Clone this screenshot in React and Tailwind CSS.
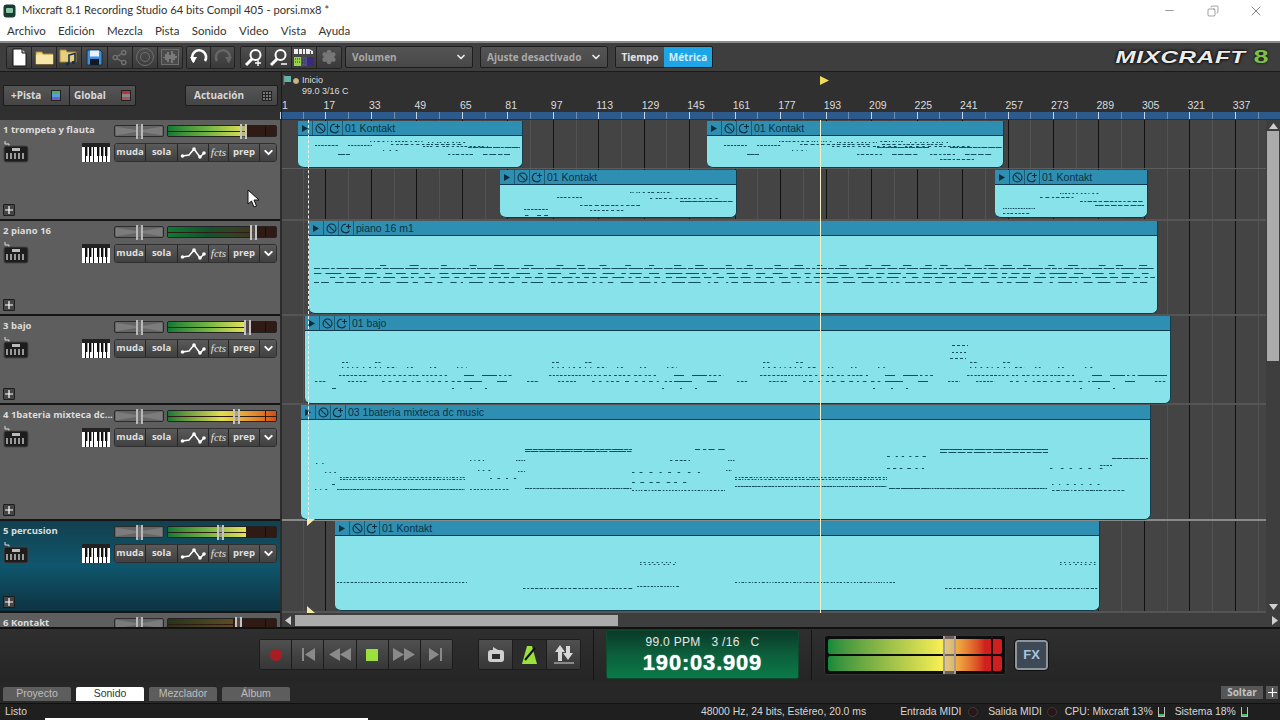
import React from "react";
import { ChevronDown, Minus, X, Copy, Settings, Share2 } from "lucide-react";

const rng = (seed) => {
  let s = seed;
  return () => {
    s = (s * 16807) % 2147483647;
    return s / 2147483647;
  };
};
// dashes on one pitch row: [x1, x2, y, minLen, maxLen, minGap, maxGap]
const row = (x1, x2, y, a = 2, b = 6, g1 = 1, g2 = 3, seed = 7) => {
  const r = rng(Math.round(x1 * 13 + y * 97 + seed * 31) + 11);
  const out = [];
  let x = x1;
  while (x < x2) {
    const w = a + r() * (b - a);
    out.push([x, y, Math.min(w, x2 - x)]);
    x += w + g1 + r() * (g2 - g1);
  }
  return out;
};
const many = (list) => list.flatMap((l) => row(...l));

const notesK1 = (o, t) =>
  many([
    [o + 17, o + 40, t + 24, 2, 3, 1, 1],
    [o + 50, o + 74, t + 24, 2, 3, 1, 1],
    [o + 40, o + 52, t + 33, 6, 12, 0, 1],
    [o + 72, o + 125, t + 20, 1, 3, 1, 3],
    [o + 93, o + 165, t + 23, 2, 4, 1, 3],
    [o + 125, o + 190, t + 25, 2, 3, 1, 4],
    [o + 170, o + 222, t + 26, 3, 8, 0, 1],
    [o + 130, o + 170, t + 21, 1, 2, 1, 4],
    [o + 85, o + 100, t + 29, 1, 2, 3, 6],
    [o + 150, o + 175, t + 33, 2, 4, 1, 2],
    [o + 185, o + 212, t + 33, 4, 7, 1, 2],
  ]);

const bassMotif = (b) =>
  many([
    [b, b + 8, 362, 2, 3, 1, 2],
    [b + 33, b + 40, 362, 2, 3, 1, 2],
    [b, b + 40, 367, 1, 2, 3, 5],
    [b + 45, b + 55, 367, 2, 3, 2, 3],
    [b + 65, b + 72, 367, 1, 2, 2, 3],
    [b + 88, b + 95, 367, 1, 2, 2, 3],
    [b + 115, b + 125, 367, 1, 2, 3, 4],
    [b - 3, b + 40, 375, 2, 3, 1, 2],
    [b + 42, b + 105, 375, 2, 3, 1, 4],
    [b + 122, b + 132, 375, 10, 10, 1, 1],
    [b + 140, b + 155, 375, 15, 15, 1, 1],
    [b + 157, b + 172, 375, 2, 3, 2, 3],
    [b + 6, b + 25, 381, 2, 3, 1, 2],
    [b + 40, b + 120, 381, 2, 4, 2, 6],
    [b + 122, b + 140, 381, 18, 18, 1, 1],
    [b + 155, b + 165, 381, 10, 10, 1, 1],
    [b + 110, b + 112, 388, 2, 2, 1, 1],
    [b + 128, b + 130, 388, 2, 2, 1, 1],
    [b + 143, b + 145, 388, 2, 2, 1, 1],
    [b + 185, b + 197, 381, 2, 3, 1, 2],
  ]);

const clips = [
  { lane: 0, x: 298, top: 121, w: 225, h: 47, name: "01 Kontakt", notes: notesK1(298, 121) },
  { lane: 0, x: 707, top: 121, w: 297, h: 47, name: "01 Kontakt", notes: [...notesK1(707, 121), ...notesK1(780, 121).filter((n) => n[0] > 880), ...many([[940, 975, 159, 2, 4, 1, 2]])] },
  { lane: 0, x: 500, top: 170, w: 237, h: 48, name: "01 Kontakt", notes: many([[524, 548, 209, 2, 3, 1, 1], [557, 582, 197, 2, 3, 1, 2], [580, 640, 205, 2, 4, 1, 3], [630, 672, 192, 1, 3, 1, 3], [650, 720, 198, 2, 3, 1, 4], [680, 733, 201, 3, 8, 0, 1], [590, 625, 210, 2, 3, 1, 3], [525, 550, 215, 3, 5, 3, 9]]) },
  { lane: 0, x: 995, top: 170, w: 153, h: 48, name: "01 Kontakt", notes: many([[1003, 1035, 208, 1, 2, 1, 1], [1003, 1030, 213, 2, 3, 1, 2], [1040, 1075, 197, 2, 4, 1, 3], [1060, 1100, 193, 1, 2, 1, 3], [1080, 1144, 201, 2, 5, 1, 2], [1095, 1144, 205, 3, 6, 0, 2]]) },
  {
    lane: 1, x: 309, top: 221, w: 849, h: 93, name: "piano 16 m1",
    notes: many([
      [380, 1155, 265, 5, 10, 8, 24],
      [314, 1155, 268, 3, 16, 1, 2],
      [314, 1155, 273, 4, 18, 3, 9],
      [330, 1155, 277, 3, 12, 2, 6],
      [314, 1155, 282, 2, 14, 2, 8],
    ]),
  },
  {
    lane: 2, x: 305, top: 316, w: 866, h: 88, name: "01 bajo",
    notes: [
      ...bassMotif(342),
      ...bassMotif(552),
      ...bassMotif(763),
      ...bassMotif(970),
      ...many([
        [315, 327, 381, 2, 3, 1, 2],
        [332, 336, 388, 4, 4, 1, 1],
        [952, 968, 345, 3, 3, 2, 2],
        [952, 966, 352, 2, 2, 2, 2],
        [950, 966, 358, 3, 3, 2, 2],
        [1138, 1167, 375, 29, 29, 1, 1],
      ]),
    ],
  },
  {
    lane: 3, x: 301, top: 405, w: 850, h: 115, name: "03 1bateria mixteca dc music",
    notes: many([
      [340, 465, 477, 1, 3, 1, 2], [340, 465, 479, 1, 3, 1, 2],
      [315, 330, 489, 1, 2, 3, 4], [337, 465, 489, 1, 3, 0, 1], [470, 510, 489, 1, 3, 1, 2],
      [316, 326, 463, 1, 2, 4, 5], [325, 336, 472, 1, 2, 3, 5], [332, 336, 484, 3, 3, 2, 2],
      [470, 485, 460, 1, 2, 2, 3], [478, 495, 470, 1, 2, 3, 5], [490, 520, 478, 1, 3, 4, 6],
      [516, 526, 460, 1, 2, 1, 1], [518, 525, 471, 1, 2, 1, 2],
      [525, 632, 449, 3, 14, 0, 1], [525, 632, 451, 2, 10, 0, 2], [525, 632, 488, 1, 3, 0, 1],
      [632, 700, 472, 2, 3, 5, 8], [632, 690, 482, 2, 4, 3, 7], [632, 725, 490, 1, 3, 1, 2],
      [670, 690, 460, 2, 3, 1, 3], [695, 725, 449, 3, 8, 2, 5],
      [728, 735, 460, 1, 2, 1, 1], [726, 732, 470, 1, 2, 1, 2],
      [735, 887, 477, 1, 3, 1, 2], [735, 887, 479, 1, 3, 1, 2], [735, 887, 486, 1, 3, 0, 1],
      [887, 930, 456, 2, 4, 3, 6], [887, 925, 468, 2, 4, 3, 6],
      [889, 925, 488, 4, 8, 0, 1], [940, 1048, 449, 5, 16, 0, 1], [940, 1048, 452, 3, 12, 1, 2], [925, 1048, 488, 1, 3, 0, 1],
      [1050, 1110, 468, 2, 3, 6, 9], [1052, 1100, 484, 1, 2, 5, 7], [1052, 1125, 490, 1, 4, 0, 2],
      [1112, 1148, 458, 3, 6, 0, 1], [1100, 1112, 465, 2, 3, 1, 1],
    ]),
  },
  {
    lane: 4, x: 335, top: 521, w: 765, h: 90, name: "01 Kontakt",
    notes: many([
      [337, 467, 582, 1, 3, 1, 2],
      [523, 633, 588, 1, 4, 1, 2],
      [637, 680, 586, 1, 3, 1, 2],
      [640, 678, 562, 1, 2, 2, 4],
      [640, 678, 564, 1, 2, 2, 4],
      [735, 895, 582, 1, 3, 1, 2],
      [945, 1098, 588, 1, 4, 1, 2],
      [1060, 1097, 562, 1, 2, 2, 4],
      [1060, 1097, 564, 1, 2, 2, 4],
    ]),
  },
];

const tracks = [
  { h: "h-[101px]", name: "1 trompeta y flauta", fill: 73, thumb: 67, bright: true },
  { h: "h-[95px]", name: "2 piano 16", fill: 80, thumb: 76, mid: true },
  { h: "h-[89px]", name: "3 bajo", fill: 71, thumb: 70, bright: true },
  { h: "h-[116px]", name: "4 1bateria mixteca dc...", fill: 100, thumb: 60, hot: true },
  { h: "h-[92px]", name: "5 percusion", fill: 72, thumb: 45, sel: true, bright: true },
  { h: "h-[20px]", name: "6 Kontakt", fill: 60, thumb: 62, off: true },
];
const laneHeights = ["h-[101px]", "h-[95px]", "h-[89px]", "h-[116px]", "h-[92px]"];
const rulerNums = [1, 17, 33, 49, 65, 81, 97, 113, 129, 145, 161, 177, 193, 209, 225, 241, 257, 273, 289, 305, 321, 337];
const CANVAS_X = 282;
const barX = (k) => 280 + 45.47 * k;

const Cap = ({ children, className = "" }) => (
  <div className={`flex items-center justify-center h-full border-r border-[#262626] last:border-r-0 bg-linear-to-b from-[#5a5a5a] to-[#404040] ${className}`}>{children}</div>
);

const Doc = () => (
  <svg width="15" height="19" viewBox="0 0 15 19"><path d="M1 1h9l4 4v13H1z" fill="#fff" stroke="#111" /><path d="M10 1v4h4" fill="#ccc" stroke="#111" /></svg>
);
const Folder = () => (
  <svg width="19" height="15" viewBox="0 0 19 15"><path d="M1 2h6l1 2h10v10H1z" fill="#f3dc8f" stroke="#a98a3a" /><path d="M1 5h17v9H1z" fill="#f7e6a8" /></svg>
);
const FolderMusic = () => (
  <svg width="20" height="18" viewBox="0 0 20 18"><path d="M1 2h6l1 2h9v10H1z" fill="#e7cf80" stroke="#a98a3a" /><path d="M10 16V7l6-1.5V14" fill="none" stroke="#16304a" strokeWidth="1.6" /><circle cx="8.5" cy="16" r="1.8" fill="#16304a" /><circle cx="14.5" cy="14.5" r="1.8" fill="#16304a" /></svg>
);
const Save = () => (
  <svg width="17" height="17" viewBox="0 0 17 17"><path d="M1 1h13l2 2v13H1z" fill="#3f8fdc" stroke="#12304e" /><rect x="4" y="1.5" width="9" height="6" fill="#e8f2fb" /><rect x="4" y="10" width="9" height="6" fill="#101a24" /></svg>
);
const Pod = () => (
  <svg width="20" height="20" viewBox="0 0 20 20" fill="none" stroke="#6f6f6f"><circle cx="10" cy="10" r="8.5" /><circle cx="10" cy="10" r="4.5" /></svg>
);
const WaveDim = () => (
  <svg width="18" height="16" viewBox="0 0 18 16"><rect x=".5" y=".5" width="17" height="15" fill="#4b4b4b" stroke="#6f6f6f" /><path d="M3 8v1M5 5v6M7 3v10M9 6v4M11 2v12M13 5v6M15 7v2" stroke="#9a9a9a" strokeWidth="1.2" /></svg>
);
const Undo = ({ c = "#fff", flip }) => (
  <svg width="20" height="19" viewBox="0 0 20 19" fill="none" className={flip ? "-scale-x-100" : ""}><path d="M5 14 A7 7 0 1 1 16 13" stroke={c} strokeWidth="2.6" /><path d="M1 9h7l-3.5 6z" fill={c} /></svg>
);
const Zoom = ({ plus }) => (
  <svg width="19" height="19" viewBox="0 0 19 19" fill="none"><circle cx="11.5" cy="7" r="5" stroke="#fff" strokeWidth="2" /><path d="M8 11 L2 17" stroke="#fff" strokeWidth="3" /><path d={plus ? "M11 15h6M14 12v6" : "M12 16h6"} stroke="#fff" strokeWidth="1.4" /></svg>
);
const MidiIcon = () => (
  <svg width="22" height="19" viewBox="0 0 22 19"><path d="M1 1h4v5h1V1h3v5h1V1h2v5h1V1h3l4 2v3h-2V3h-1v3H1z" fill="#eee" /><rect x="1" y="9" width="7" height="9" fill="#9bd050" /><rect x="8" y="9" width="6" height="9" fill="#4c4c8a" /><rect x="14" y="9" width="7" height="9" fill="#3a2a80" /><path d="M2 11h5M2 14h5M9 12h4M9 15h4" stroke="#333" strokeDasharray="1 1" /></svg>
);
const ListIcon = ({ red }) => (
  <div className="flex flex-col w-[10px] h-[11px] border border-[#222]">
    <div className={red ? "flex-1 bg-[#c0303a]" : "flex-1 bg-[#4fae5c]"} />
    <div className={red ? "flex-1 bg-[#888]" : "flex-1 bg-[#5aa0d8]"} />
    <div className={red ? "flex-1 bg-[#aa5555]" : "flex-1 bg-[#6a62c8]"} />
  </div>
);

const Synth = () => (
  <svg width="26" height="24" viewBox="0 0 26 24" className="shrink-0 -mt-[3px]">
    <path d="M2 1v3h4v2" fill="none" stroke="#ddd" strokeWidth="1" />
    <rect x="1" y="6" width="24" height="16" rx="2" fill="#1d1d1d" stroke="#444" />
    <rect x="9" y="8" width="8" height="3" fill="#bbb" />
    <path d="M4 13v6M8 13v6M12 13v6M16 13v6M20 13v6" stroke="#999" strokeWidth="2" />
  </svg>
);
const Piano = () => (
  <div className="w-[28px] h-[19px] bg-[#222] flex flex-col pt-[4px]">
    <div className="flex-1 flex gap-px bg-[#111] relative">
      {[0, 1, 2, 3, 4, 5, 6].map((i) => (
        <div key={i} className="flex-1 bg-white" />
      ))}
      <svg width="28" height="9" className="absolute left-0 top-0" viewBox="0 0 28 9">
        {[3, 7, 15, 19, 23].map((x) => (
          <rect key={x} x={x} y="0" width="2.4" height="9" fill="#111" />
        ))}
      </svg>
    </div>
  </div>
);
const Curve = () => (
  <svg width="26" height="14" viewBox="0 0 26 14" fill="none"><path d="M2 10 L9 9 L14 3 L20 11 L24 7" stroke="#fff" strokeWidth="1.5" /><circle cx="2.5" cy="10" r="1.8" fill="#fff" /><circle cx="14" cy="3" r="1.8" fill="#fff" /><circle cx="20" cy="11" r="1.8" fill="#fff" /><circle cx="24" cy="7" r="1.8" fill="#fff" /></svg>
);

function TrackHead({ t }) {
  const lit = t.off ? "opacity-25" : "";
  const bar = t.hot
    ? "bg-linear-to-r from-[#0d7a35] via-[#e3df4c] to-[#d84a14]"
    : t.mid
      ? "bg-linear-to-r from-[#0d7a35] via-[#11512a] to-[#3b3520]"
      : "bg-linear-to-r from-[#0d7a35] via-[#71b343] to-[#e4e25a]";
  return (
    <div className={`${t.h} shrink-0 flex flex-col overflow-hidden border-b-2 border-[#151515] pl-[3px] pr-[3px] pt-[4px] ${t.sel ? "bg-linear-to-b from-[#12404f] via-[#0f566d] to-[#0c3342]" : "bg-[#5e5e5e]"}`}>
      <div className="flex items-center h-[14px] shrink-0">
        <span className="w-[111px] shrink-0 pb-[2px] text-[9.5px] font-bold leading-none text-[#dcdcdc] whitespace-nowrap">{t.name}</span>
        <div className="relative shrink-0 w-[50px] h-[12px] rounded-[2px] border border-[#2c2c2c] bg-[#656565]">
          <svg className="absolute inset-0 w-full h-full" viewBox="0 0 50 12" preserveAspectRatio="none"><path d="M1 1L24 5v2L1 11zM49 1L26 5v2L49 11z" fill="#7c7c7c" /></svg>
          <div className="absolute left-[21px] top-[-2px] w-[7px] h-[15px] border-x-2 border-[#b9b9b9] bg-[#777]/60" />
        </div>
        <div className="relative shrink-0 ml-[3px] w-[110px] h-[12px] rounded-[2px] border border-[#222] bg-[#2f1a14]">
          <div className={`absolute inset-y-0 left-0 flex flex-col gap-px overflow-hidden ${lit}`} style={{ width: `${t.fill}%` }}>
            <div className={`flex-1 ${bar}`} />
            <div className={`flex-1 ${bar}`} />
          </div>
          <div className="absolute right-[10px] inset-y-0 w-px bg-[#1c0d08]" />
          <div className="absolute top-[-2px] w-[7px] h-[15px] border-x-2 border-[#c4c4c4] bg-[#888]/40" style={{ left: `${t.thumb}%` }} />
        </div>
      </div>
      {!t.off && (
        <>
          <div className="flex items-start mt-[5px] shrink-0 h-[24px]">
            <Synth />
            <div className="ml-[53px]"><Piano /></div>
            <div className="ml-[4px] flex w-[164px] h-[19px] rounded-[3px] overflow-hidden border border-[#2f2f2f] text-[9.5px] font-bold text-[#e0e0e0]">
              <Cap className="w-[31px]">muda</Cap>
              <Cap className="w-[32px]">sola</Cap>
              <Cap className="w-[31px]"><Curve /></Cap>
              <Cap className="w-[20px] italic font-normal text-[11px] font-['Liberation_Serif']">fcts</Cap>
              <Cap className="w-[31px]">prep</Cap>
              <Cap className="flex-1"><ChevronDown size={13} strokeWidth={3.5} color="#fff" /></Cap>
            </div>
          </div>
          <div className="mt-auto mb-[3px] w-[12px] h-[12px] rounded-[1px] border border-[#1d1d1d] bg-[#444] flex items-center justify-center">
            <svg width="8" height="8" viewBox="0 0 8 8"><path d="M4 0v8M0 4h8" stroke="#fff" strokeWidth="1.2" /></svg>
          </div>
        </>
      )}
    </div>
  );
}

function Clip({ c }) {
  return (
    <div
      className="absolute z-10 flex flex-col rounded-b-[6px] overflow-hidden border-b border-r border-[#123c4c] bg-[#88e2ea]"
      style={{ left: c.x - CANVAS_X, top: c.top - 120 - [0, 101, 196, 285, 401][c.lane], width: c.w, height: c.h }}
    >
      <div className="flex items-center h-[15px] shrink-0 bg-[#2e8fb2] border-b border-[#0e3a4e] text-[10.5px] text-[#0d3344] font-['Liberation_Sans'] leading-none">
        <div className="w-[15px] h-full flex items-center justify-center border-r border-[#1c5d76]">
          <svg width="6" height="7" viewBox="0 0 6 7"><path d="M0 0l6 3.5L0 7z" fill="#0e2c3a" /></svg>
        </div>
        <div className="w-[15px] h-full flex items-center justify-center border-r border-[#1c5d76]">
          <svg width="11" height="11" viewBox="0 0 11 11" fill="none" stroke="#0e2c3a" strokeWidth="1.1"><circle cx="5.5" cy="5.5" r="4.5" /><path d="M2.3 2.3l6.4 6.4" /></svg>
        </div>
        <div className="w-[15px] h-full flex items-center justify-center border-r border-[#1c5d76]">
          <svg width="12" height="11" viewBox="0 0 12 11" fill="none" stroke="#0e2c3a" strokeWidth="1.1"><path d="M9.5 7.5A4.3 4.3 0 1 1 6 1.2" /><path d="M8.5 1v5M6 3.5h5" /></svg>
        </div>
        <span className="ml-[2px] whitespace-nowrap">{c.name}</span>
      </div>
      <svg className="absolute left-0 top-0" width={c.w} height={c.h} viewBox={`${c.x} ${c.top} ${c.w} ${c.h}`}>
        {c.notes.map((n, i) => (
          <rect key={i} x={n[0]} y={n[1]} width={n[2]} height="1" fill="#12505f" />
        ))}
      </svg>
    </div>
  );
}

const TBtn = ({ children }) => (
  <div className="flex items-center justify-center flex-1 h-full border-r border-[#222] last:border-r-0 bg-linear-to-b from-[#4e4e4e] to-[#3a3a3a]">{children}</div>
);
const Select = ({ w, label }) => (
  <div className={`${w} h-[22px] flex items-center justify-between pl-[6px] pr-[5px] rounded-[2px] border border-[#1d1d1d] bg-linear-to-b from-[#555] to-[#474747]`}>
    <span className="text-[10px] font-bold text-[#a9a9a9]">{label}</span>
    <ChevronDown size={12} strokeWidth={3.5} color="#e8e8e8" />
  </div>
);
const TrBtn = ({ children, active }) => (
  <div className={`flex items-center justify-center flex-1 h-full border-r border-[#1c1c1c] last:border-r-0 ${active ? "bg-[#2c2c2c]" : "bg-linear-to-b from-[#505050] to-[#363636]"}`}>{children}</div>
);
const Tab = ({ children, active }) => (
  <div className={`w-[68px] h-[14px] flex items-center justify-center text-[10.5px] rounded-t-[2px] ${active ? "bg-white text-[#333]" : "bg-[#5d5d5d] text-[#bdbdbd]"}`}>{children}</div>
);
const Led = () => <div className="w-[10px] h-[10px] rounded-full bg-[#2a1518] border border-[#3b3b3b] ml-[5px]" />;
const CpuBar = () => (
  <div className="w-[7px] h-[10px] border-x border-b border-[#bbb] ml-[5px] flex items-end"><div className="w-full h-[2px] bg-[#45c45a]" /></div>
);

export default function App() {
  return (
    <div className="w-[1280px] h-[720px] overflow-hidden flex flex-col bg-[#2a2a2a] font-['Open_Sans',sans-serif]">
      {/* Title bar */}
      <div className="h-[21px] shrink-0 bg-white flex items-center pl-[3px] text-[11.2px] text-[#333] font-['Lato',sans-serif]">
        <svg width="13" height="14" viewBox="0 0 13 14"><rect x=".5" y=".5" width="12" height="13" rx="3" fill="#1c3a33" /><rect x="3" y="4" width="7" height="5" rx="1" fill="#86c9a4" /></svg>
        <span className="ml-[6px]">Mixcraft 8.1 Recording Studio 64 bits Compil 405 - porsi.mx8 *</span>
        <div className="ml-auto flex items-center text-[#444]">
          <Minus size={13} strokeWidth={1} />
          <Copy size={12} strokeWidth={1} className="ml-[31px] -scale-x-100" />
          <X size={16} strokeWidth={1} className="ml-[29px] mr-[16px]" />
        </div>
      </div>
      {/* Menu */}
      <div className="h-[20px] shrink-0 bg-white flex items-center pl-[7px] gap-[12.3px] text-[11.5px] text-[#333] font-['Lato',sans-serif]">
        {["Archivo", "Edición", "Mezcla", "Pista", "Sonido", "Video", "Vista", "Ayuda"].map((m) => (
          <span key={m}>{m}</span>
        ))}
      </div>
      {/* Toolbar */}
      <div className="h-[31px] shrink-0 flex items-center pl-[6px] bg-[#3e3e3e] border-t-2 border-t-[#8b8b8b] border-b border-b-[#1a1a1a]">
        <div className="flex w-[177px] h-[23px] rounded-[2px] overflow-hidden border border-[#222]">
          <TBtn><Doc /></TBtn>
          <TBtn><Folder /></TBtn>
          <TBtn><FolderMusic /></TBtn>
          <TBtn><Save /></TBtn>
          <TBtn><Share2 size={17} color="#707070" /></TBtn>
          <TBtn><Pod /></TBtn>
          <TBtn><WaveDim /></TBtn>
        </div>
        <div className="flex w-[49px] h-[23px] ml-[3px] rounded-[2px] overflow-hidden border border-[#222]">
          <TBtn><Undo c="#fff" /></TBtn>
          <TBtn><Undo c="#666" flip /></TBtn>
        </div>
        <div className="flex w-[102px] h-[23px] ml-[5px] rounded-[2px] overflow-hidden border border-[#222]">
          <TBtn><Zoom plus /></TBtn>
          <TBtn><Zoom /></TBtn>
          <TBtn><MidiIcon /></TBtn>
          <TBtn><Settings size={16} color="#777" fill="#777" /></TBtn>
        </div>
        <div className="ml-[3px]"><Select w="w-[128px]" label="Volumen" /></div>
        <div className="ml-[7px]"><Select w="w-[128px]" label="Ajuste desactivado" /></div>
        <div className="ml-[7px] flex h-[22px] w-[98px] rounded-[2px] overflow-hidden border border-[#1d1d1d] text-[10px] font-bold">
          <div className="flex-1 flex items-center justify-center bg-linear-to-b from-[#555] to-[#474747] text-[#e4e4e4]">Tiempo</div>
          <div className="flex-1 flex items-center justify-center bg-[#1da5e6] text-[#d5eefc]">Métrica</div>
        </div>
        <div className="ml-auto mr-[12px] flex items-center gap-[8px] leading-none font-['Liberation_Sans'] font-bold">
          <span className="text-[17px] tracking-[0.5px] text-[#ececec] italic scale-x-[1.42] origin-right [text-shadow:0_0_2px_#000,0_0_3px_#000]">MIXCRAFT</span>
          <span className="text-[18px] text-[#7cc04a] scale-x-[1.5] origin-center w-[14px] text-center [text-shadow:0_0_2px_#000]">8</span>
        </div>
      </div>
      {/* Header */}
      <div className="h-[48px] shrink-0 flex bg-[#303030]">
        <div className="w-[282px] shrink-0 flex items-start pt-[13px] pl-[3px] border-r border-[#1a1a1a]">
          <div className="flex w-[133px] h-[21px] rounded-[2px] overflow-hidden border border-[#1c1c1c] text-[10px] font-bold text-[#d8d8d8]">
            <div className="w-[66px] flex items-center justify-between pl-[7px] pr-[8px] border-r border-[#1c1c1c] bg-linear-to-b from-[#555] to-[#454545]">+Pista<ListIcon /></div>
            <div className="flex-1 flex items-center justify-between pl-[4px] pr-[4px] bg-linear-to-b from-[#555] to-[#454545]">Global<ListIcon red /></div>
          </div>
          <div className="ml-[49px] flex items-center justify-between w-[93px] h-[21px] pl-[8px] pr-[5px] rounded-[2px] border border-[#1c1c1c] text-[10px] font-bold text-[#d8d8d8] bg-linear-to-b from-[#555] to-[#454545]">
            Actuación
            <div className="grid grid-cols-3 gap-px w-[10px] h-[10px] bg-[#222] p-px">
              {[0, 1, 2, 3, 4, 5, 6, 7, 8].map((i) => <div key={i} className="bg-[#777]" />)}
            </div>
          </div>
        </div>
        <div className="relative flex-1 font-['Liberation_Sans'] text-[#dcdcdc]">
          <svg className="absolute left-[1px] top-[3px]" width="18" height="12" viewBox="0 0 18 12"><path d="M1 1h7v6H1z" fill="#5fb3a8" /><path d="M1 0v10" stroke="#888" /><circle cx="13" cy="6" r="3.5" fill="#c8b48a" stroke="#222" /></svg>
          <span className="absolute left-[20px] top-[2px] text-[9px] leading-[12px]">Inicio</span>
          <span className="absolute left-[20px] top-[13px] text-[9px] leading-[12px]">99.0 3/16 C</span>
          {rulerNums.map((n, k) => (
            <span key={n} className="absolute top-[27px] text-[10.5px] leading-[12px]" style={{ left: k === 0 ? 0 : barX(k) - CANVAS_X - 2 }}>{n}</span>
          ))}
          <div className="absolute left-0 right-0 top-[40px] h-[7px] bg-[#2c5a8c]" />
          {rulerNums.map((n, k) => (
            <React.Fragment key={n}>
              <div className="absolute top-[40px] h-[7px] w-px bg-[#c5d2e0]" style={{ left: barX(k) - CANVAS_X }} />
              <div className="absolute top-[40px] h-[7px] w-px bg-[#6f8db0]" style={{ left: barX(k) - CANVAS_X + 22.7 }} />
            </React.Fragment>
          ))}
          <svg className="absolute left-[538px] top-[4px]" width="9" height="9" viewBox="0 0 9 9"><path d="M0 0l9 4.5L0 9z" fill="#f0dc5a" /></svg>
        </div>
      </div>
      {/* Tracks area */}
      <div className="h-[507px] shrink-0 flex">
        <div className="relative w-[282px] shrink-0 flex flex-col overflow-hidden border-r-2 border-[#2b2b2b]">
          {tracks.map((t) => (
            <TrackHead key={t.name} t={t} />
          ))}
          <svg className="absolute left-[247px] top-[69px]" width="13" height="19" viewBox="0 0 13 19"><path d="M1 1v14l3.5-3 2.5 6 2.5-1-2.5-6H12z" fill="#fff" stroke="#111" /></svg>
        </div>
        <div className="flex-1 flex flex-col min-w-0">
          <div className="h-[493px] shrink-0 flex">
            <div className="relative flex-1 bg-[#444] overflow-hidden flex flex-col">
              {rulerNums.map((n, k) => (
                <React.Fragment key={n}>
                  <div className="absolute inset-y-0 w-px bg-[#111]" style={{ left: barX(k) - CANVAS_X }} />
                  <div className="absolute inset-y-0 w-px bg-[#525252]" style={{ left: barX(k) - CANVAS_X + 22.7 }} />
                </React.Fragment>
              ))}
              {laneHeights.map((h, i) => (
                <div key={h} className={`${h} relative shrink-0 ${i === 3 ? "border-b-2 border-[#8a8a8a]" : "border-b-2 border-[#555]"}`}>
                  {i === 0 && <div className="absolute left-0 right-0 top-[48px] h-px bg-[#5d5d5d]" />}
                  {clips.filter((c) => c.lane === i).map((c) => <Clip key={c.x} c={c} />)}
                </div>
              ))}
              <div className="absolute z-20 top-0 bottom-[93px] left-[26px] border-l border-dashed border-[#f1f1f1]" />
              <div className="absolute z-20 top-0 bottom-0 left-[538px] w-px bg-[#f4f0c0]" />
              <svg className="absolute z-20 left-[25px] top-[399px]" width="8" height="7" viewBox="0 0 8 7"><path d="M0 0h8L0 7z" fill="#f3e9a8" /></svg>
              <svg className="absolute z-20 left-[25px] bottom-0" width="8" height="7" viewBox="0 0 8 7"><path d="M0 0l8 7H0z" fill="#f3e9a8" /></svg>
            </div>
            <div className="w-[14px] shrink-0 bg-[#3e3e3e] flex flex-col items-center pt-[3px] pb-[3px]">
              <svg width="9" height="6" viewBox="0 0 9 6"><path d="M4.5 0L9 6H0z" fill="#cfcfcf" /></svg>
              <div className="mt-[2px] w-[12px] h-[230px] bg-[#ababab]" />
              <svg className="mt-auto" width="9" height="6" viewBox="0 0 9 6"><path d="M4.5 6L9 0H0z" fill="#cfcfcf" /></svg>
            </div>
          </div>
          <div className="flex-1 bg-[#3e3e3e] flex items-center pl-[3px] pr-[2px]">
            <svg width="6" height="9" viewBox="0 0 6 9"><path d="M0 4.5L6 0v9z" fill="#cfcfcf" /></svg>
            <div className="ml-[4px] w-[323px] h-[11px] bg-[#ababab]" />
            <svg className="ml-auto" width="6" height="9" viewBox="0 0 6 9"><path d="M6 4.5L0 0v9z" fill="#cfcfcf" /></svg>
          </div>
        </div>
      </div>
      {/* Transport */}
      <div className="h-[55px] shrink-0 flex items-center border-t-2 border-[#111] bg-linear-to-b from-[#2f2f2f] to-[#252525] pl-[259px] pb-[2px]">
        <div className="flex w-[194px] h-[31px] rounded-[2px] overflow-hidden border border-[#1c1c1c]">
          <TrBtn><div className="w-[12px] h-[12px] rounded-full bg-[#a81c22]" /></TrBtn>
          <TrBtn><svg width="14" height="13" viewBox="0 0 14 13"><path d="M1 0h2v13H1zM14 0v13L4 6.5z" fill="#8a8a8a" /></svg></TrBtn>
          <TrBtn><svg width="22" height="13" viewBox="0 0 22 13"><path d="M11 0v13L0 6.5zM22 0v13L11 6.5z" fill="#8a8a8a" /></svg></TrBtn>
          <TrBtn><div className="w-[12px] h-[12px] bg-[#9be03c]" /></TrBtn>
          <TrBtn><svg width="22" height="13" viewBox="0 0 22 13"><path d="M0 0v13l11-6.5zM11 0v13l11-6.5z" fill="#8a8a8a" /></svg></TrBtn>
          <TrBtn><svg width="14" height="13" viewBox="0 0 14 13"><path d="M13 0h-2v13h2zM0 0v13l10-6.5z" fill="#8a8a8a" /></svg></TrBtn>
        </div>
        <div className="flex w-[103px] h-[31px] ml-[25px] rounded-[2px] overflow-hidden border border-[#1c1c1c]">
          <TrBtn><svg width="18" height="17" viewBox="0 0 18 17"><rect x="1" y="4" width="16" height="12" rx="3" fill="#cfcfcf" /><path d="M6 1l5 3-5 3z" fill="#cfcfcf" /><rect x="5" y="8" width="8" height="5" fill="#2c2c2c" /></svg></TrBtn>
          <TrBtn active><svg width="16" height="20" viewBox="0 0 16 20"><path d="M5 1h5l5 18H0z" fill="#9be03c" /><path d="M3 15L13 3" stroke="#111" strokeWidth="2" /></svg></TrBtn>
          <TrBtn><svg width="20" height="19" viewBox="0 0 20 19" fill="#d8d8d8"><path d="M6 0l5 7H8v9H4V7H1zM14 15l-5-7h3V1h4v7h3z" /><path d="M0 17.5h20v1H0z" /></svg></TrBtn>
        </div>
        <div className="w-px h-[50px] bg-[#151515] ml-[12px]" />
        <div className="ml-[12px] w-[193px] h-[49px] rounded-[2px] border border-[#0f4a2e] bg-linear-to-b from-[#0a3a28] via-[#0c5f3c] to-[#0a7a47] flex flex-col items-center justify-center text-white font-['Liberation_Sans'] leading-none">
          <span className="text-[12px] text-[#e8e8e8] whitespace-pre tracking-[0.3px]">99.0 PPM   3 /16   C</span>
          <span className="mt-[4px] text-[22px] font-bold tracking-[0.8px] [text-shadow:0_0_1px_#fff]">190:03.909</span>
        </div>
        <div className="w-px h-[50px] bg-[#151515] ml-[12px]" />
        <div className="relative ml-[12px] w-[182px] h-[40px] rounded-[3px] bg-[#0d0d0d] border border-[#333] p-[3px] flex flex-col gap-[2px]">
          <div className="flex-1 rounded-[2px] bg-linear-to-r from-[#0f8a3b] via-[#f6ee54] via-65% to-[#d01f1f] to-90%" />
          <div className="flex-1 rounded-[2px] bg-linear-to-r from-[#0f8a3b] via-[#f6ee54] via-65% to-[#d01f1f] to-90%" />
          <div className="absolute inset-y-0 right-[12px] w-[2px] bg-[#2a0a0a]" />
          <div className="absolute top-0 bottom-0 left-[118px] w-[13px] border-x-2 border-[#a99] bg-[#c9b4a8]/50" />
        </div>
        <div className="ml-[9px] w-[33px] h-[30px] rounded-[3px] border-2 border-[#8d949a] bg-[#3d4a56] outline-1 outline-[#111] flex items-center justify-center text-[13px] font-bold text-[#a9c6dd] font-['Liberation_Sans']">FX</div>
      </div>
      {/* Tabs */}
      <div className="h-[21px] shrink-0 bg-[#272727] flex items-center pl-[3px] gap-[5px] pt-[3px] text-[#bbb] font-['Liberation_Sans']">
        <Tab>Proyecto</Tab>
        <Tab active>Sonido</Tab>
        <Tab>Mezclador</Tab>
        <Tab>Álbum</Tab>
        <div className="ml-auto flex items-center gap-[3px] mr-[2px] -mt-[3px]">
          <div className="w-[42px] h-[13px] flex items-center justify-center bg-[#565656] text-[10px] font-bold text-[#c2c2c2] font-['Open_Sans']">Soltar</div>
          <div className="w-[12px] h-[13px] flex items-center justify-center bg-[#565656]"><svg width="9" height="9" viewBox="0 0 9 9"><path d="M4.5 0v9M0 4.5h9" stroke="#fff" strokeWidth="1.2" /></svg></div>
        </div>
      </div>
      {/* Status */}
      <div className="relative h-[17px] shrink-0 bg-[#1f1f1f] border-t border-[#111] flex items-center text-[10.4px] text-[#d6d6d6] font-['Liberation_Sans'] leading-none whitespace-nowrap">
        <span className="ml-[5px]">Listo</span>
        <span className="ml-[674px]">48000 Hz, 24 bits, Estéreo, 20.0 ms</span>
        <span className="ml-[34px] w-[63px] overflow-hidden">Entrada MIDI</span><Led />
        <span className="ml-[10px]">Salida MIDI</span><Led />
        <span className="ml-[8px]">CPU: Mixcraft 13%</span><CpuBar />
        <span className="ml-[10px]">Sistema 18%</span><CpuBar />
        <div className="absolute bottom-0 left-[45px] w-[323px] h-[2px] bg-white" />
      </div>
    </div>
  );
}
